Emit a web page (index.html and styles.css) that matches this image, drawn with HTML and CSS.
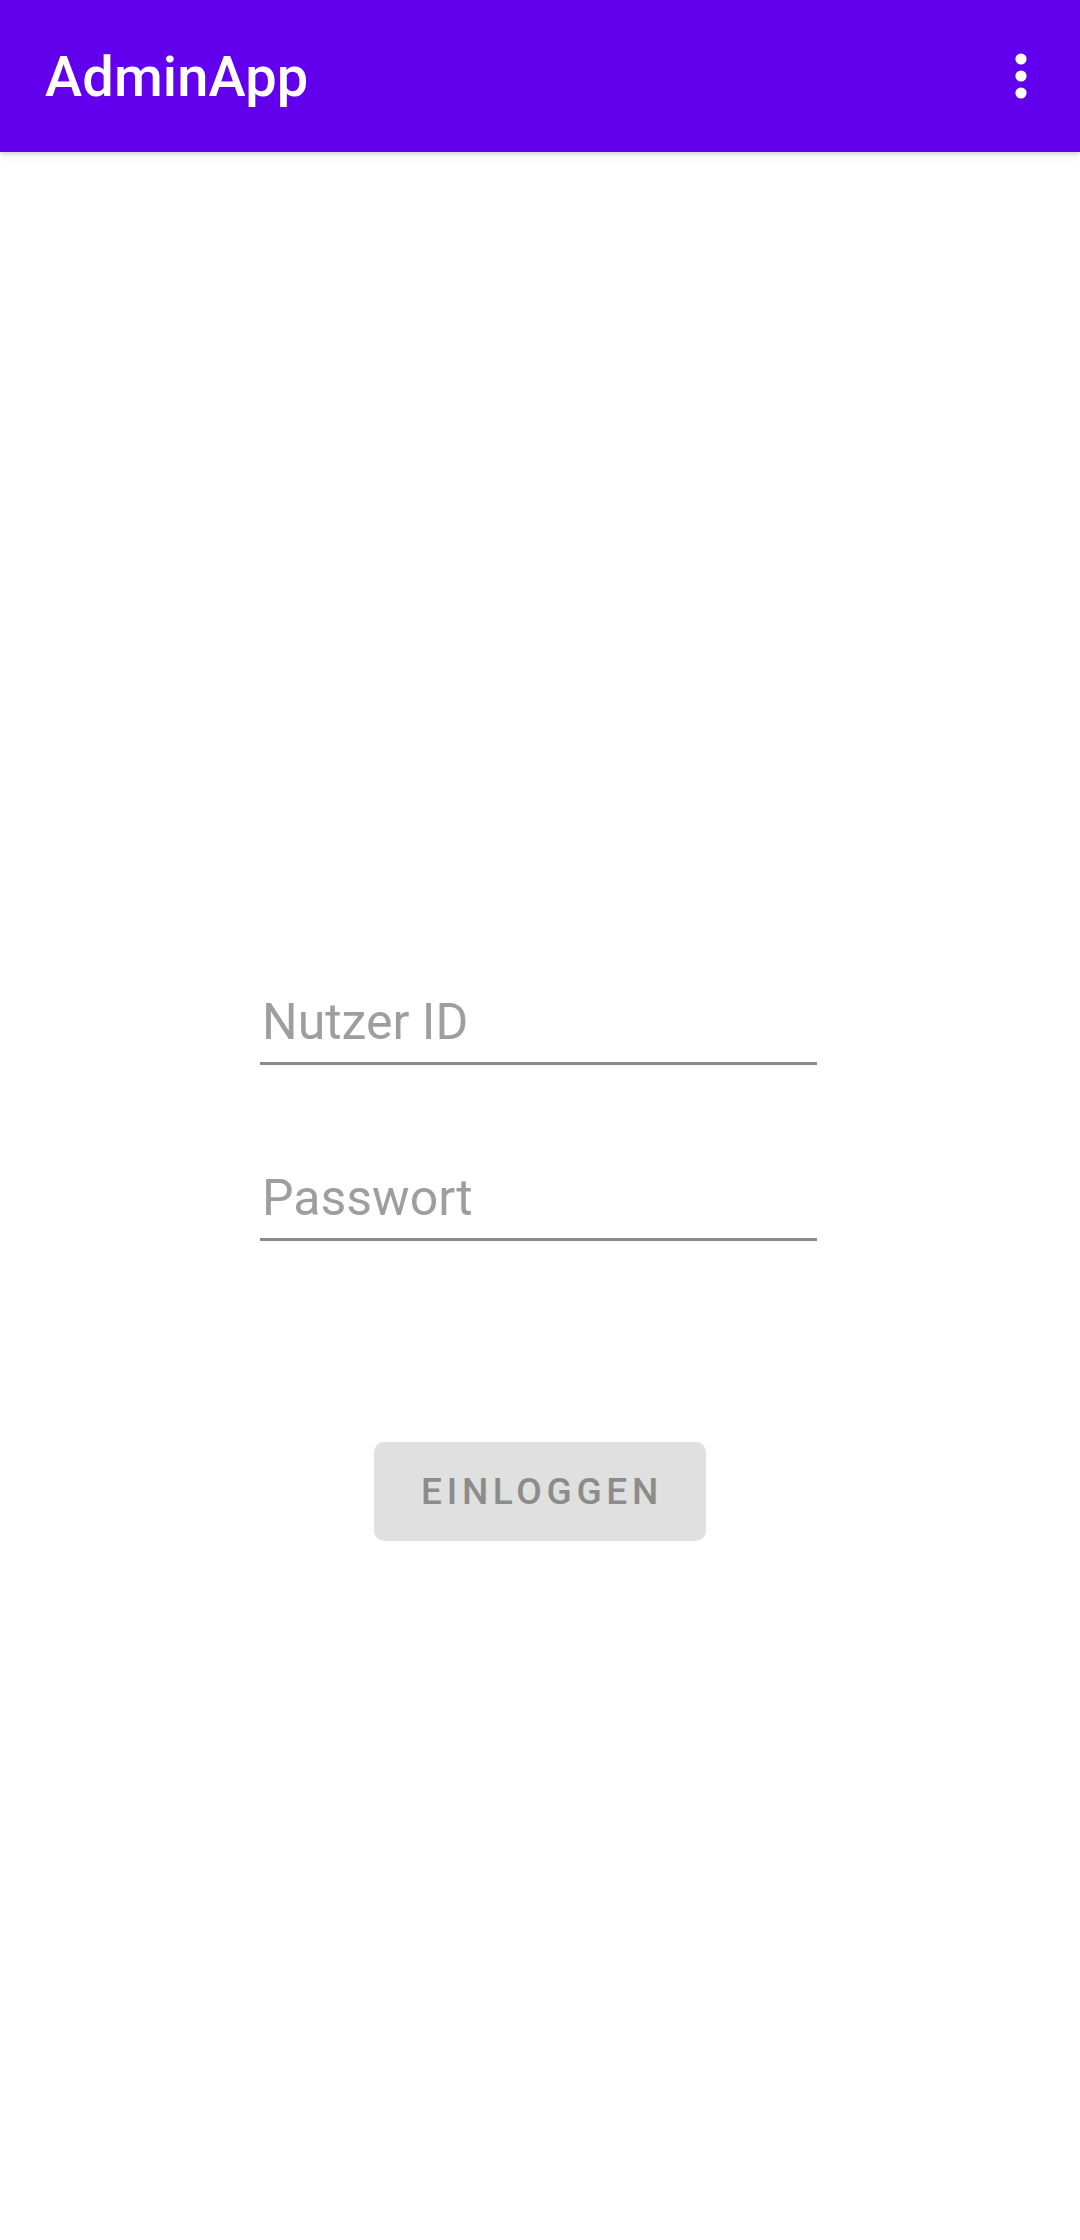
FILE: index.html
```html
<!DOCTYPE html>
<html lang="de">
<head>
<meta charset="utf-8">
<title>AdminApp</title>
<link rel="stylesheet" href="styles.css">
</head>
<body>
<header class="appbar">
  <h1 class="title">AdminApp</h1>
  <button class="overflow" aria-label="Weitere Optionen">
    <svg width="12" height="46" viewBox="0 0 12 46"><circle cx="6" cy="6" r="5.6" fill="#fff"/><circle cx="6" cy="23" r="5.6" fill="#fff"/><circle cx="6" cy="40" r="5.6" fill="#fff"/></svg>
  </button>
</header>
<main class="content">
  <form class="login">
    <div class="field"><span class="hint">Nutzer ID</span></div>
    <div class="field field-second"><span class="hint">Passwort</span></div>
    <div class="actions"><button type="button" class="btn">EINLOGGEN</button></div>
  </form>
</main>
</body>
</html>
```

FILE: styles.css
```css
* { box-sizing: border-box; }
html, body { margin: 0; padding: 0; background: #fff; }
body { font-family: Roboto, "Noto Sans", sans-serif; width: 1080px; height: 2240px; overflow: hidden; }

.appbar {
  height: 152px;
  background: #6200ee;
  display: flex;
  align-items: center;
  justify-content: space-between;
  padding: 0 40px 0 45px;
  box-shadow: 0 2px 4px rgba(0,0,0,0.14), 0 4px 12px rgba(0,0,0,0.06);
  position: relative;
  z-index: 1;
}
.title {
  margin: 0;
  color: #fff;
  font-weight: 500;
  font-size: 56px;
  line-height: 1;
  letter-spacing: 0.1px;
  position: relative;
  top: 1px;
}
.overflow {
  background: none;
  border: 0;
  padding: 0;
  width: 48px;
  display: flex;
  justify-content: center;
  margin-right: -5px;
}
.overflow svg { display: block; }

.content { padding-top: 841px; }
.login { display: flex; flex-direction: column; align-items: flex-start; }
.field {
  margin-left: 260px;
  width: 557px;
  border-bottom: 3px solid #8a8a8a;
  padding-bottom: 11px;
}
.field-second { margin-top: 104px; }
.hint {
  display: block;
  font-size: 50px;
  line-height: 58px;
  color: #9e9e9e;
  padding-left: 2px;
}
.actions { align-self: stretch; display: flex; justify-content: center; margin-top: 201px; }
.btn {
  width: 332px;
  height: 99px;
  background: #e0e0e0;
  border: 0;
  border-radius: 10px;
  font-family: Roboto, "Noto Sans", sans-serif;
  font-weight: 500;
  font-size: 37px;
  letter-spacing: 4.7px;
  color: #8c8c8c;
  padding: 0 0 0 4px;
}
```
